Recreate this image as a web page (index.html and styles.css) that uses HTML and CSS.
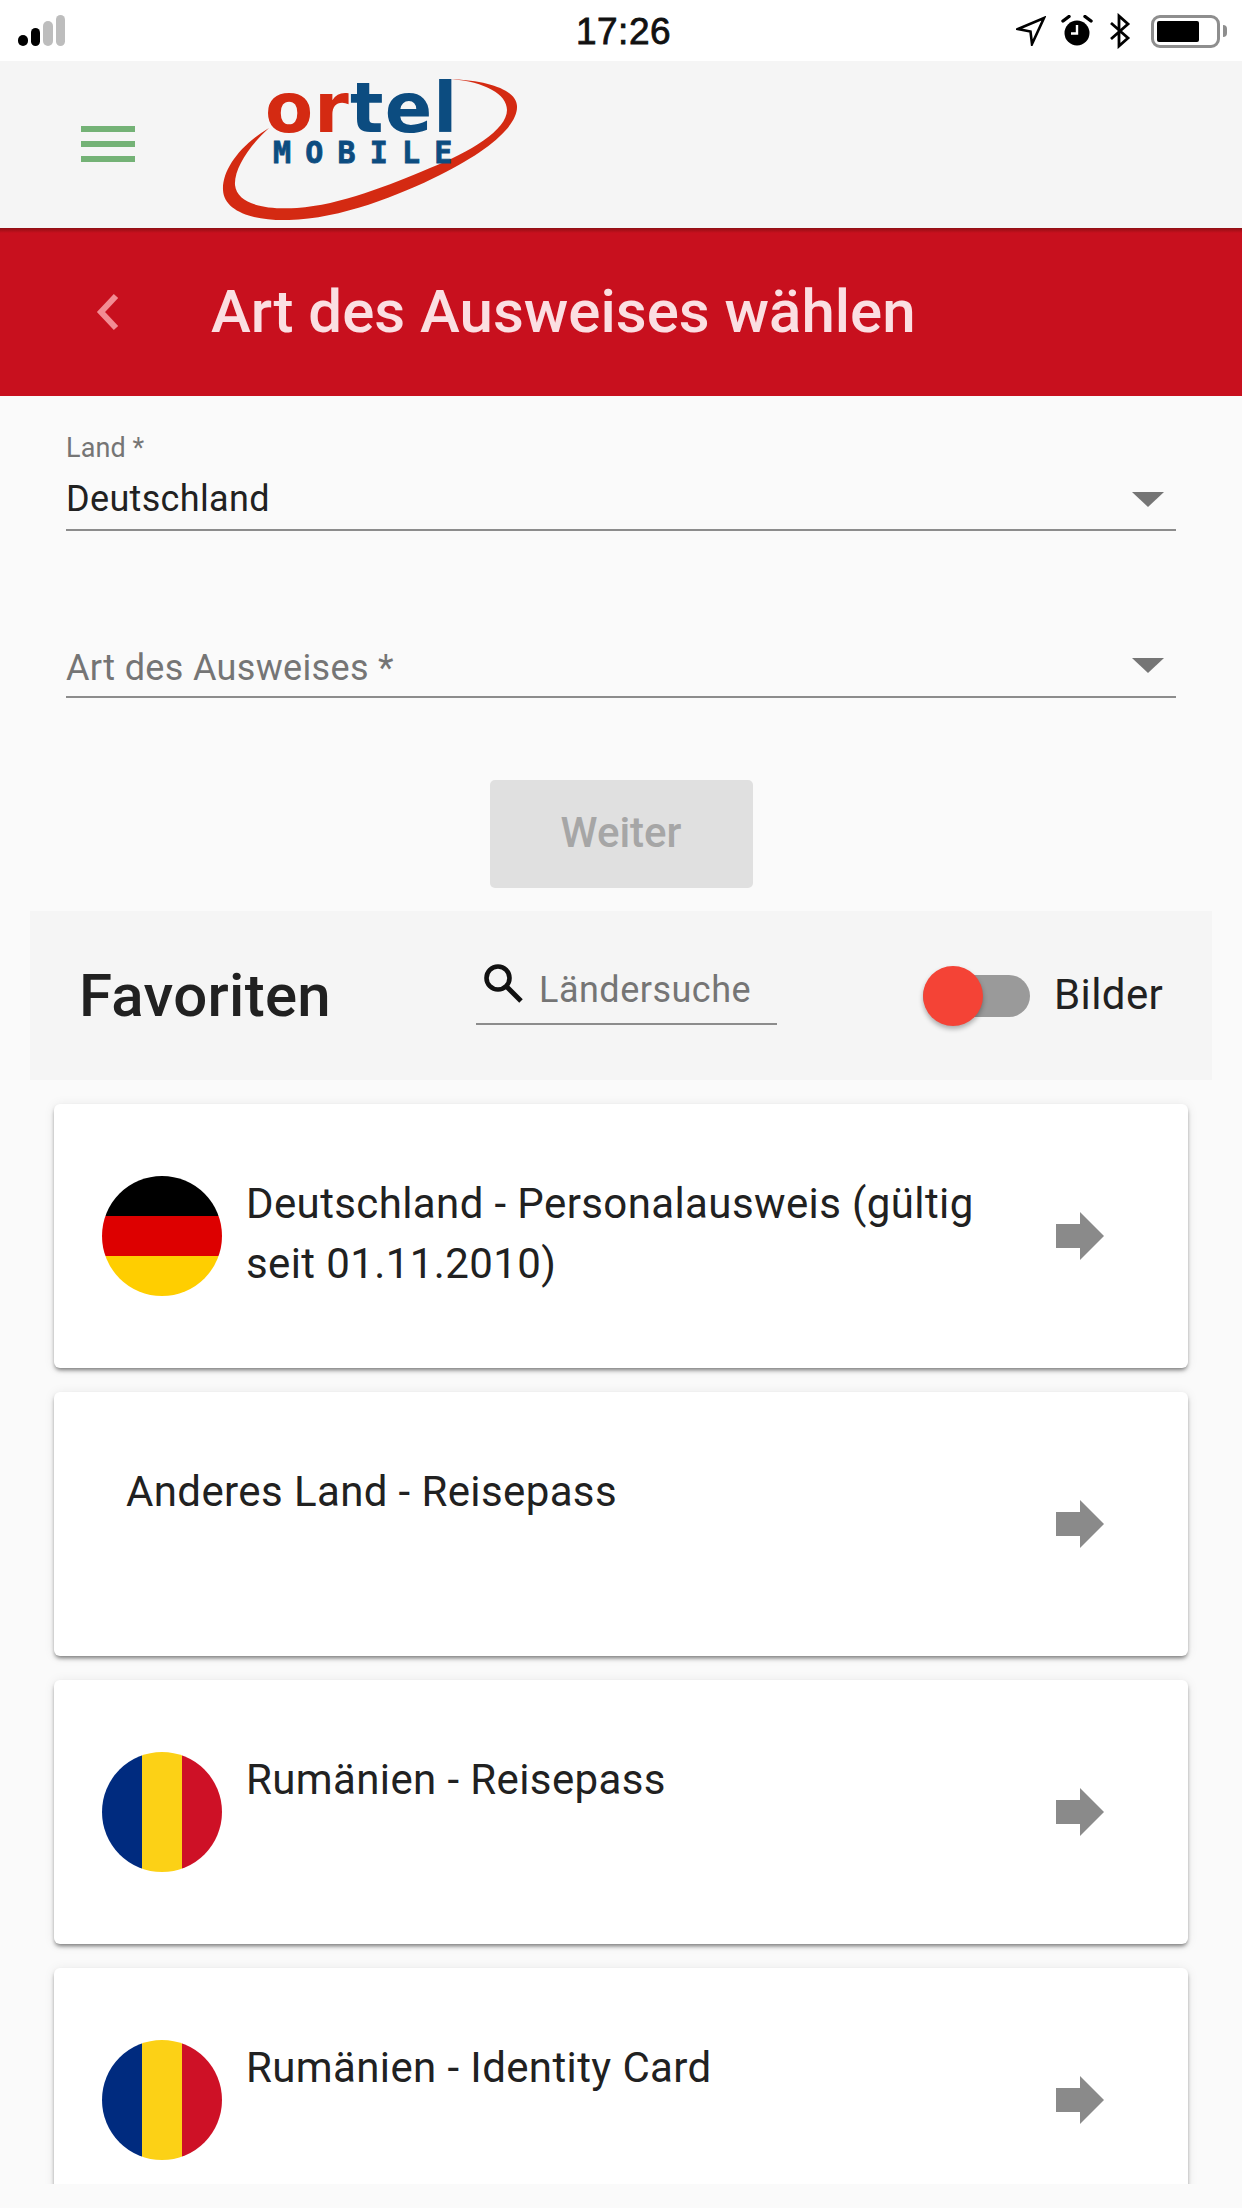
FILE: index.html
```html
<!DOCTYPE html>
<html lang="de">
<head>
<meta charset="utf-8">
<title>Art des Ausweises wählen</title>
<link rel="stylesheet" href="styles.css">
</head>
<body>
<div class="page">
  <div class="statusbar">
    <div class="signal"><i class="bar b1"></i><i class="bar b2"></i><i class="bar b3"></i><i class="bar b4"></i></div>
    <div class="time">17:26</div>
    <div class="status-icons">
      <svg class="ic-nav" width="30" height="30" viewBox="0 0 30 30"><path d="M2 13 L28 2 L16 28 L14.5 15.5 Z" fill="none" stroke="#000" stroke-width="2.6" stroke-linejoin="miter"/></svg>
      <svg class="ic-alarm" width="32" height="32" viewBox="0 0 32 32"><circle cx="16" cy="18" r="12.5" fill="#000"/><path d="M16 10 V18.5 H10" fill="none" stroke="#fff" stroke-width="2.4"/><path d="M2 6 L8 1.5 M30 6 L24 1.5" stroke="#000" stroke-width="3.4" stroke-linecap="round"/></svg>
      <svg class="ic-bt" width="24" height="36" viewBox="0 0 24 36"><path d="M3 10 L20 25 L11 33 V3 L20 11 L3 26" fill="none" stroke="#000" stroke-width="2.8"/></svg>
      <div class="battery"><div class="battery-body"><div class="battery-fill"></div></div><div class="battery-tip"></div></div>
    </div>
  </div>

  <header class="topbar">
    <div class="burger"><i></i><i></i><i></i></div>
    <div class="logo">
      <svg class="logo-swoosh" width="300" height="146" viewBox="220 77 300 146"><path fill="#d42a12" d="M269 128 C240 145 222 170 223 190 C224 210 250 221 289 220 C340 219 400 195 440 175 C490 150 518 125 517 106 C516 90 490 81 451 79 C485 82 507 94 507 110 C507 130 470 152 430 168 C390 185 340 205 297 208 C262 210 237 203 235 185 C234 168 250 145 269 128 Z"/></svg>
      <div class="logo-word"><span class="logo-red">or</span><span class="logo-blue">tel</span></div>
      <div class="logo-sub">MOBILE</div>
    </div>
  </header>

  <div class="titlebar">
    <svg class="back" width="24" height="38" viewBox="0 0 24 38"><path d="M20 3 L5 19 L20 35" fill="none" stroke="#f28d94" stroke-width="6"/></svg>
    <h1 class="title">Art des Ausweises wählen</h1>
  </div>

  <main class="content">
    <div class="form">
      <div class="field field-filled">
        <div class="field-label">Land *</div>
        <div class="field-row"><span class="field-value">Deutschland</span><i class="caret"></i></div>
      </div>
      <div class="field field-empty">
        <div class="field-row"><span class="field-placeholder">Art des Ausweises *</span><i class="caret"></i></div>
      </div>
    </div>
    <div class="actions"><button class="btn-next">Weiter</button></div>

    <section class="fav-band">
      <h2 class="fav-title">Favoriten</h2>
      <div class="search">
        <svg class="search-icon" width="42" height="42" viewBox="0 0 42 42"><circle cx="16" cy="16" r="11.5" fill="none" stroke="#111" stroke-width="4.6"/><path d="M24.5 24.5 L39 39" stroke="#111" stroke-width="5"/></svg>
        <span class="search-text">Ländersuche</span>
      </div>
      <div class="toggle-wrap">
        <div class="toggle"><div class="toggle-knob"></div></div>
        <span class="toggle-label">Bilder</span>
      </div>
    </section>

    <div class="cards">
      <article class="card">
        <div class="flag flag-de"></div>
        <div class="card-text">Deutschland - Personalausweis (gültig seit 01.11.2010)</div>
        <svg class="arrow" width="48" height="48" viewBox="0 0 48 48"><path d="M0 12 H24 V0 L48 24 L24 48 V36 H0 Z" fill="#8a8a8a"/></svg>
      </article>
      <article class="card">
        <div class="card-text">Anderes Land - Reisepass</div>
        <svg class="arrow" width="48" height="48" viewBox="0 0 48 48"><path d="M0 12 H24 V0 L48 24 L24 48 V36 H0 Z" fill="#8a8a8a"/></svg>
      </article>
      <article class="card">
        <div class="flag flag-ro"></div>
        <div class="card-text">Rumänien - Reisepass</div>
        <svg class="arrow" width="48" height="48" viewBox="0 0 48 48"><path d="M0 12 H24 V0 L48 24 L24 48 V36 H0 Z" fill="#8a8a8a"/></svg>
      </article>
      <article class="card">
        <div class="flag flag-ro"></div>
        <div class="card-text">Rumänien - Identity Card</div>
        <svg class="arrow" width="48" height="48" viewBox="0 0 48 48"><path d="M0 12 H24 V0 L48 24 L24 48 V36 H0 Z" fill="#8a8a8a"/></svg>
      </article>
    </div>
  </main>
</div>
</body>
</html>
```
FILE: styles.css
```css
* { box-sizing: border-box; }
html, body { margin: 0; padding: 0; }
body { background: #fafafa; font-family: Roboto, "Liberation Sans", sans-serif; color: #212121; }
.page { width: 1242px; height: 2208px; overflow: hidden; display: flex; flex-direction: column; }

.statusbar { height: 61px; flex: none; background: #fff; display: flex; align-items: center; justify-content: space-between; padding: 0 15px 0 18px; position: relative; }
.signal { display: flex; align-items: flex-end; gap: 3px; height: 32px; padding-bottom: 1px; }
.bar { display: block; width: 9.5px; border-radius: 5px; }
.b1 { height: 11px; background: #000; }
.b2 { height: 18px; background: #000; }
.b3 { height: 25px; background: #bdbdbd; }
.b4 { height: 31px; background: #bdbdbd; }
.time { position: absolute; left: 5px; right: 0; top: 9px; text-align: center; font-family: "Liberation Sans", sans-serif; font-size: 37px; line-height: 46px; color: #111; letter-spacing: 0.5px; font-weight: 400; -webkit-text-stroke: 0.8px #111; }
.status-icons { display: flex; align-items: center; gap: 15px; height: 61px; padding-top: 1px; }
.ic-bt { margin-right: 4px; }
.battery { display: flex; align-items: center; gap: 3px; }
.battery-body { width: 69px; height: 33px; border: 3px solid #8e8e8e; border-radius: 9px; padding: 3px; background: #fff; }
.battery-fill { width: 42px; height: 100%; background: #000; border-radius: 2px; }
.battery-tip { width: 4px; height: 12px; background: #8e8e8e; border-radius: 0 4px 4px 0; }

.topbar { height: 167px; flex: none; background: #f5f5f5; display: flex; align-items: flex-start; position: relative; padding-left: 81px; }
.burger { width: 54px; margin-top: 65px; display: flex; flex-direction: column; gap: 9px; }
.burger i { display: block; height: 6px; background: #74b276; }
.logo { position: relative; width: 300px; height: 146px; margin-left: 85px; margin-top: 16px; }
.logo-swoosh { display: block; }
.logo-word { position: absolute; left: 45px; top: 1px; display: flex; font-family: "DejaVu Sans", sans-serif; font-weight: 700; font-size: 70px; line-height: 60px; letter-spacing: 1.2px; }
.logo-red { color: #d42a12; }
.logo-blue { color: #0c4c80; }
.logo-sub { position: absolute; left: 53px; top: 64px; font-family: "DejaVu Sans Mono", monospace; font-weight: 700; font-size: 30px; line-height: 24px; letter-spacing: 14.2px; color: #0c4c80; -webkit-text-stroke: 0.8px #0c4c80; white-space: nowrap; }

.titlebar { height: 168px; flex: none; background: linear-gradient(#8f0f14, #c8101e 5px); display: flex; align-items: center; padding-left: 96px; }
.back { margin-right: 91px; }
.title { margin: 0; font-size: 60px; font-weight: 500; color: #fbdfe2; line-height: 68px; white-space: nowrap; }

.content { height: 1788px; flex: none; overflow: hidden; background: #fafafa; padding: 0 30px; }
.form { padding: 0 36px; }
.field { border-bottom: 2px solid #8c8c8c; }
.field-filled { height: 135px; padding-top: 38px; }
.field-empty { height: 167px; margin-top: 0; display: flex; align-items: flex-end; padding-bottom: 3px; }
.field-label { font-size: 27px; line-height: 28px; color: #757575; letter-spacing: .1px; }
.field-row { width: 100%; display: flex; align-items: center; justify-content: space-between; padding-right: 12px; height: 50px; }
.field-filled .field-row { margin-top: 12px; }
.field-value { font-size: 36px; color: #212121; letter-spacing: .34px; }
.field-placeholder { font-size: 36px; color: #757575; letter-spacing: .34px; }
.field-empty .caret { margin-top: -5px; }
.caret { width: 0; height: 0; border-left: 16px solid transparent; border-right: 16px solid transparent; border-top: 15px solid #757575; }

.actions { display: flex; justify-content: center; padding-top: 82px; }
.btn-next { width: 263px; height: 108px; border: 0; border-radius: 5px; padding: 0 0 4px; background: #e0e0e0; color: #a6a6a6; font-family: Roboto, sans-serif; font-size: 42px; font-weight: 500; }

.fav-band { height: 169px; margin-top: 23px; background: #f5f5f5; display: flex; align-items: center; position: relative; padding-left: 49px; }
.fav-title { margin: 0; width: 397px; font-size: 60px; font-weight: 500; color: #212121; line-height: 68px; letter-spacing: .3px; }
.search { width: 301px; height: 62px; margin-top: -4px; display: flex; align-items: flex-start; border-bottom: 2px solid #8c8c8c; padding-left: 6px; }
.search-icon { margin-top: -1px; margin-right: 15px; }
.search-text { font-size: 36px; line-height: 40px; margin-top: 7px; color: #757575; letter-spacing: .5px; }
.toggle-wrap { display: flex; align-items: center; margin-left: 146px; }
.toggle { width: 107px; height: 42px; background: #9a9a9a; border-radius: 21px; position: relative; margin-right: 24px; }
.toggle-knob { position: absolute; left: 0; top: -9px; width: 60px; height: 60px; border-radius: 50%; background: #f44336; box-shadow: 0 3px 5px rgba(0,0,0,.3); }
.toggle-label { font-size: 42px; line-height: 50px; margin-top: -2px; color: #212121; letter-spacing: .4px; }

.cards { display: flex; flex-direction: column; gap: 24px; padding: 24px 24px 0 24px; }
.card { flex: none; height: 264px; background: #fff; border-radius: 6px; box-shadow: 0 3px 4px -1px rgba(0,0,0,.5), 0 1px 12px rgba(0,0,0,.08); padding: 72px 84px 0 48px; display: flex; align-items: flex-start; position: relative; }
.flag { width: 120px; height: 120px; border-radius: 50%; flex: none; }
.flag-de { background: linear-gradient(#000 0 33.3%, #dd0000 33.3% 66.6%, #ffce00 66.6%); }
.flag-ro { background: linear-gradient(90deg, #002b7f 0 33.3%, #fcd116 33.3% 66.6%, #ce1126 66.6%); }
.card-text { flex: 1; margin-left: 24px; margin-top: -2px; font-size: 42px; line-height: 60px; letter-spacing: .39px; color: #212121; padding-right: 40px; }
.arrow { flex: none; margin-top: 36px; }
```
